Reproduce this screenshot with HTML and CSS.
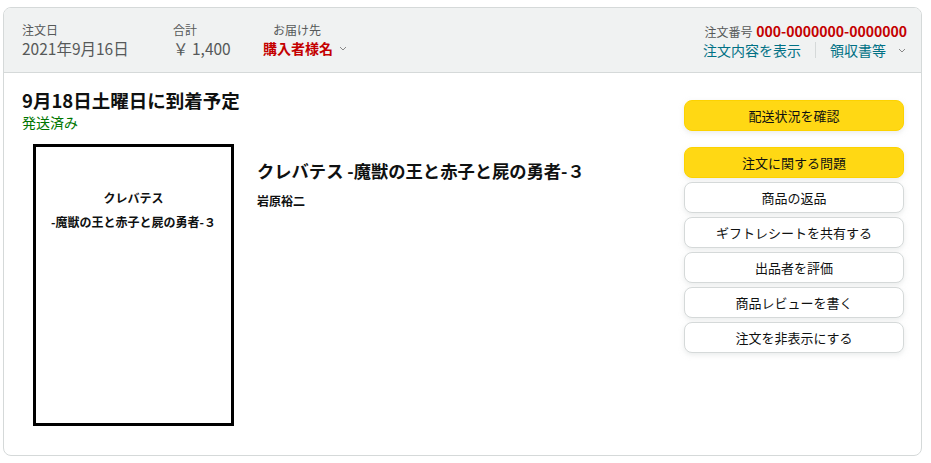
FILE: index.html
```html
<!DOCTYPE html>
<html lang="ja">
<head>
<meta charset="utf-8">
<link rel="stylesheet" href="styles.css">
</head>
<body>
<div class="card">
  <div class="head">
    <div class="head-left">
      <div class="col col-date">
        <div class="label">注文日</div>
        <div class="value">2021年9月16日</div>
      </div>
      <div class="col col-total">
        <div class="label">合計</div>
        <div class="value">￥ 1,400</div>
      </div>
      <div class="col col-ship">
        <div class="label label-ship">お届け先</div>
        <div class="value buyer">購入者様名 <svg class="chev" width="8" height="5" viewBox="0 0 8 5"><path d="M1 1l3 3 3-3" fill="none" stroke="#888" stroke-width="1"/></svg></div>
      </div>
    </div>
    <div class="head-right">
      <div class="order-no"><span class="label">注文番号</span> <span class="num">000-0000000-0000000</span></div>
      <div class="links">
        <span class="link">注文内容を表示</span>
        <span class="sep"></span>
        <span class="link">領収書等</span>
        <svg class="chev chev-r" width="8" height="5" viewBox="0 0 8 5"><path d="M1 1l3 3 3-3" fill="none" stroke="#888" stroke-width="1"/></svg>
      </div>
    </div>
  </div>
  <div class="body">
    <div class="main">
      <h2 class="arrival">9月18日土曜日に到着予定</h2>
      <div class="status">発送済み</div>
      <div class="item">
        <div class="cover">
          <div class="cover-title">クレバテス</div>
          <div class="cover-title">-魔獣の王と赤子と屍の勇者-３</div>
        </div>
        <div class="info">
          <div class="title">クレバテス -魔獣の王と赤子と屍の勇者-３</div>
          <div class="author">岩原裕二</div>
        </div>
      </div>
    </div>
    <div class="actions">
      <div class="btn yellow first">配送状況を確認</div>
      <div class="btn yellow">注文に関する問題</div>
      <div class="btn">商品の返品</div>
      <div class="btn">ギフトレシートを共有する</div>
      <div class="btn">出品者を評価</div>
      <div class="btn">商品レビューを書く</div>
      <div class="btn">注文を非表示にする</div>
    </div>
  </div>
</div>
</body>
</html>
```
FILE: styles.css
```css
* { box-sizing: border-box; }
body {
  margin: 0;
  padding: 7px 9px 0 3px;
  background: #fff;
  font-family: "Noto Sans CJK JP", "Noto Sans", sans-serif;
  color: #0f1111;
}
.card {
  border: 1px solid #d5d9d9;
  border-radius: 8px;
  height: 449px;
  overflow: hidden;
}
.head {
  background: #f0f2f2;
  border-bottom: 1px solid #d5d9d9;
  height: 65px;
  display: flex;
  justify-content: space-between;
  padding: 14px 14px 0 18px;
}
.head-left { display: flex; }
.col-date { width: 151px; }
.col-total { width: 90px; }
.label {
  font-size: 12px;
  line-height: 16px;
  color: #565959;
}
.label-ship { padding-left: 10px; }
.value {
  font-size: 15.5px;
  line-height: 20px;
  color: #565959;
}
.buyer {
  font-size: 14px;
  color: #c40000;
  font-weight: bold;
  display: flex;
  align-items: center;
  gap: 6px;
}
.chev { display: block; }
.head-right {
  display: flex;
  flex-direction: column;
  align-items: flex-end;
}
.order-no { line-height: 16px; }
.num {
  color: #c40000;
  font-weight: bold;
  font-size: 14px;
}
.links {
  display: flex;
  align-items: center;
  font-size: 14px;
  line-height: 20px;
  margin-right: -1px;
}
.link { color: #007185; }
.sep {
  width: 1px;
  height: 16px;
  background: #d5d9d9;
  margin: 0 14px;
}
.chev-r { margin-left: 12px; margin-right: 2px; }
.body {
  display: flex;
  padding: 15px 17px 0 18px;
}
.main { flex: 1; }
.arrival {
  margin: 0;
  font-size: 18.5px;
  line-height: 24px;
  font-weight: bold;
}
.status {
  margin-top: 1px;
  font-size: 14px;
  line-height: 18px;
  color: #007600;
}
.item {
  display: flex;
  margin-top: 13px;
  padding-left: 11px;
}
.cover {
  width: 201px;
  height: 282px;
  border: 3px solid #000;
  display: flex;
  flex-direction: column;
  align-items: center;
  gap: 8px;
  padding-top: 43px;
}
.cover-title {
  font-size: 12px;
  font-weight: bold;
  line-height: 16px;
}
.info {
  padding: 15px 0 0 23px;
}
.title {
  font-size: 17.3px;
  font-weight: bold;
  line-height: 24px;
}
.author {
  margin-top: 10px;
  font-size: 12px;
  font-weight: bold;
  line-height: 16px;
}
.actions {
  width: 220px;
  display: flex;
  flex-direction: column;
  gap: 4px;
  padding-top: 12px;
}
.btn {
  height: 31px;
  border: 1px solid #d5d9d9;
  border-radius: 8px;
  background: #fff;
  font-size: 13px;
  display: flex;
  align-items: center;
  justify-content: center;
  box-shadow: 0 2px 5px rgba(213, 217, 217, 0.5);
}
.btn.yellow {
  background: #ffd814;
  border-color: #fcd200;
}
.btn.first { margin-bottom: 12px; }
```
